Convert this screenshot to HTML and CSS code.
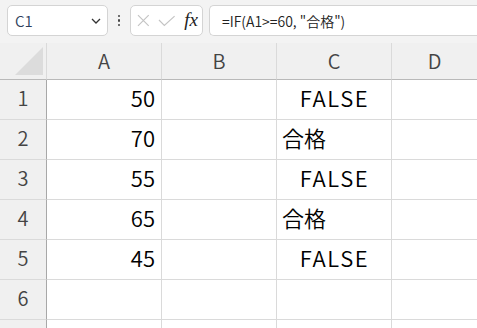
FILE: index.html
```html
<!DOCTYPE html>
<html lang="ja">
<head>
<meta charset="utf-8">
<link rel="stylesheet" href="styles.css">
</head>
<body>
<div class="toolbar">
  <div class="namebox">
    <span class="name">C1</span>
    <svg class="chev" width="10" height="6" viewBox="0 0 10 6"><path d="M1 1 L5 5 L9 1" fill="none" stroke="#333" stroke-width="1.3"/></svg>
  </div>
  <div class="vdots"><span></span><span></span><span></span></div>
  <div class="btns">
    <svg width="13" height="13" viewBox="0 0 13 13"><path d="M1 1 L12 12 M12 1 L1 12" stroke="#c4c4c4" stroke-width="1.2" fill="none"/></svg>
    <svg width="18" height="12" viewBox="0 0 18 12"><path d="M1 5 L6.5 10.5 L17 1" stroke="#c4c4c4" stroke-width="1.2" fill="none"/></svg>
    <span class="fx">fx</span>
  </div>
  <div class="formula">=IF(A1&gt;=60, "合格")</div>
</div>
<div class="sheet">
  <div class="corner"><div class="tri"></div></div>
  <div class="ch">A</div>
  <div class="ch">B</div>
  <div class="ch">C</div>
  <div class="ch last">D</div>

  <div class="rh">1</div><div class="c num">50</div><div class="c"></div><div class="c bool">FALSE</div><div class="c last"></div>
  <div class="rh">2</div><div class="c num">70</div><div class="c"></div><div class="c txt">合格</div><div class="c last"></div>
  <div class="rh">3</div><div class="c num">55</div><div class="c"></div><div class="c bool">FALSE</div><div class="c last"></div>
  <div class="rh">4</div><div class="c num">65</div><div class="c"></div><div class="c txt">合格</div><div class="c last"></div>
  <div class="rh">5</div><div class="c num">45</div><div class="c"></div><div class="c bool">FALSE</div><div class="c last"></div>
  <div class="rh">6</div><div class="c"></div><div class="c"></div><div class="c"></div><div class="c last"></div>
  <div class="rh"></div><div class="c"></div><div class="c"></div><div class="c"></div><div class="c last"></div>
</div>
</body>
</html>
```
FILE: styles.css
```css
html, body {
  margin: 0;
  padding: 0;
  background: #f3f3f3;
  font-family: "Noto Sans CJK JP", "Noto Sans", sans-serif;
  font-weight: 350;
  overflow: hidden;
  width: 477px;
  height: 328px;
}
.toolbar {
  height: 43px;
  box-sizing: border-box;
  padding: 5px 0 0 7px;
  display: flex;
  align-items: flex-start;
}
.namebox {
  width: 101px;
  height: 31px;
  box-sizing: border-box;
  background: #fff;
  border: 1px solid #d4d4d4;
  border-radius: 5px;
  display: flex;
  align-items: center;
  justify-content: space-between;
  padding: 0 6px 0 7px;
}
.name {
  font-size: 15px;
  color: #2e3f5c;
  line-height: 1;
}
.chev { margin-top: 1px; }
.vdots {
  width: 22px;
  height: 31px;
  display: flex;
  flex-direction: column;
  align-items: center;
  justify-content: center;
  gap: 2px;
}
.vdots span {
  width: 2.5px;
  height: 2.5px;
  background: #444;
  border-radius: 50%;
}
.btns {
  width: 73px;
  height: 31px;
  box-sizing: border-box;
  background: #fff;
  border: 1px solid #d4d4d4;
  border-radius: 5px;
  display: flex;
  align-items: center;
  padding: 0 4px 0 6px;
  gap: 8px;
}
.fx {
  font-family: "Liberation Serif", "DejaVu Serif", serif;
  font-style: italic;
  font-weight: 400;
  font-size: 19px;
  color: #222;
  line-height: 1;
  margin-left: 1px;
  margin-top: -2px;
}
.formula {
  margin-left: 6px;
  flex: 1;
  height: 31px;
  box-sizing: border-box;
  background: #fff;
  border: 1px solid #d4d4d4;
  border-right: none;
  border-radius: 5px 0 0 5px;
  font-size: 14px;
  color: #222;
  display: flex;
  align-items: center;
  padding-left: 12px;
}
.sheet {
  display: grid;
  grid-template-columns: 47px 115px 115px 115px 1fr;
  grid-template-rows: 37px repeat(7, 40px);
}
.corner, .ch {
  background: #f0f0f0;
  border-bottom: 1px solid #b9b9b9;
  box-sizing: border-box;
  position: relative;
}
.corner { border-right: 1px solid #dadada; }
.ch {
  border-right: 1px solid #dadada;
  display: flex;
  align-items: center;
  justify-content: center;
  font-size: 20px;
  color: #444;
  padding-bottom: 1px;
}
.ch.last { border-right: none; }
.tri {
  position: absolute;
  left: 15px;
  top: 4px;
  width: 0;
  height: 0;
  border-left: 28px solid transparent;
  border-bottom: 28px solid #dcdcdc;
}
.rh {
  background: #f0f0f0;
  border-right: 1px solid #a8a8a8;
  border-bottom: 1px solid #dadada;
  box-sizing: border-box;
  display: flex;
  align-items: center;
  justify-content: center;
  font-size: 20px;
  color: #444;
  padding-bottom: 4px;
}
.c {
  background: #fff;
  border-right: 1px solid #dadada;
  border-bottom: 1px solid #dadada;
  box-sizing: border-box;
  display: flex;
  align-items: center;
  font-size: 22px;
  color: #000;
  padding: 0 6px 5px 5px;
}
.c.last { border-right: none; }
.num { justify-content: flex-end; }
.bool { justify-content: center; letter-spacing: 1.6px; padding-left: 7px; }
.txt { justify-content: flex-start; }
```
